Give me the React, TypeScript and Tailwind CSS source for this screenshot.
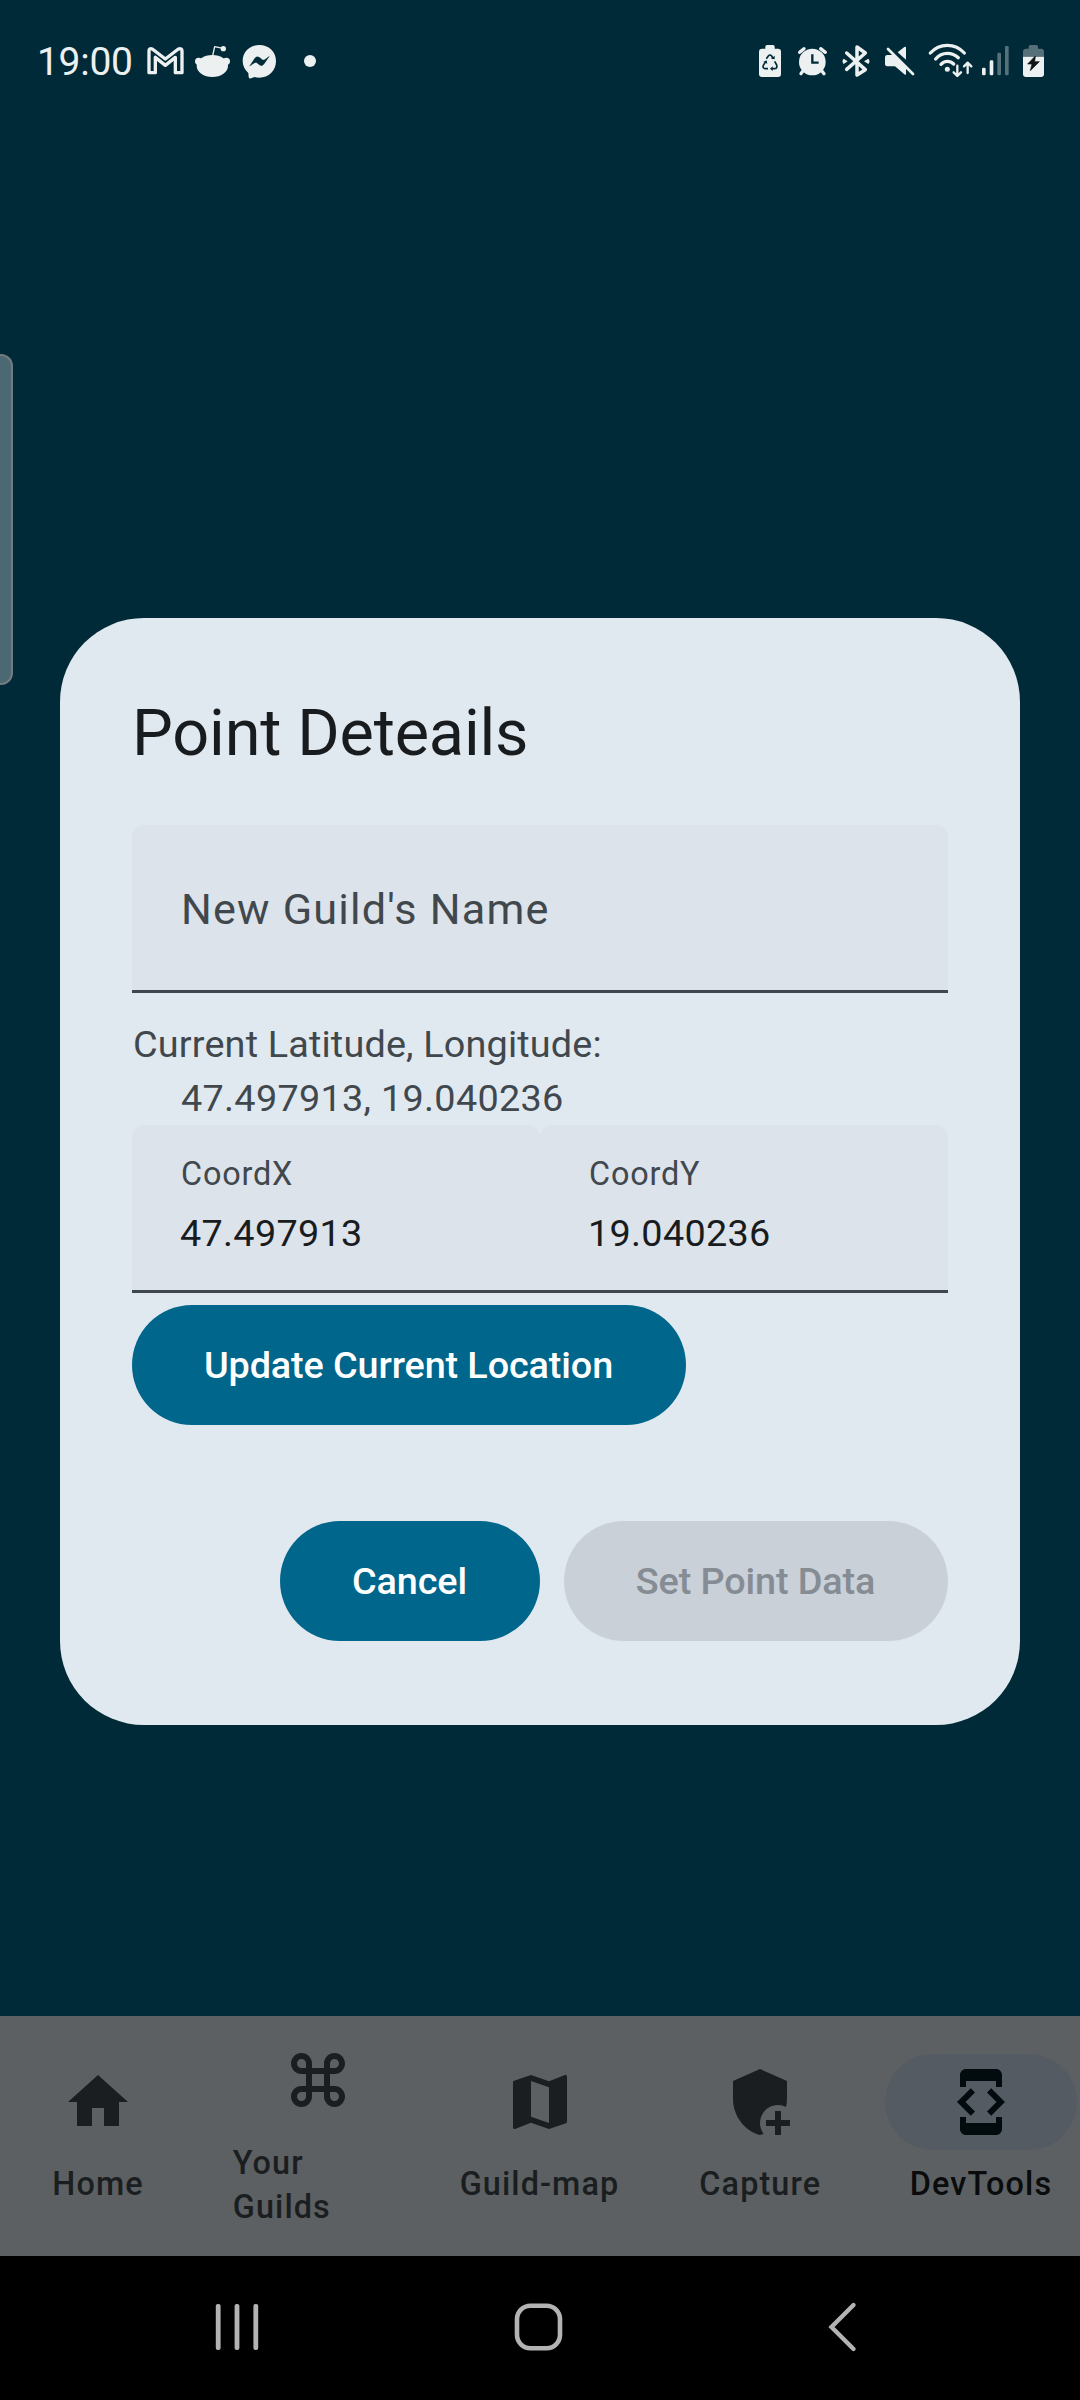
import type { ReactNode } from "react";
import {
  MdAddModerator,
  MdDeveloperMode,
  MdHome,
  MdKeyboardCommandKey,
  MdMap,
} from "react-icons/md";

const LIGHT = "#edf0f1";
const DARK = "#002a37";

function StatusBar() {
  return (
    <header className="flex h-20 shrink-0 items-center justify-between pr-[30px] pl-[37px]">
      <div className="flex h-20 items-center">
        <span className="w-[103px] pt-[3px] text-[39px] leading-[44px] tracking-[-0.3px] text-[#edf0f1]">19:00</span>
        <svg className="h-20 w-[50px]" viewBox="420 0 150 240" fill="none">
          <path
            d="M447 158V93Q447 84 457 87L496 117L535 87Q546 84 546 93V158H526V112L496 136L466 112V158Z"
            stroke={LIGHT}
            strokeWidth="10"
            strokeLinejoin="round"
          />
        </svg>
        <svg className="h-20 w-[46px]" viewBox="570 0 138 240" fill={LIGHT}>
          <ellipse cx="637" cy="138" rx="47" ry="33" />
          <circle cx="596" cy="124" r="11" />
          <circle cx="679" cy="124" r="11" />
          <path d="M638 107L644 80L669 85" fill="none" stroke={LIGHT} strokeWidth="4" strokeLinejoin="round" />
          <circle cx="670" cy="86" r="8" />
        </svg>
        <svg className="h-20 w-[47px]" viewBox="708 0 141 240" fill={LIGHT}>
          <path d="M778 75C750 75 728 95 728 123C728 138 735 150 745 159L746 171Q747 177 753 175L764 171Q771 173 778 173C806 173 828 152 828 123C828 95 806 75 778 75Z" />
          <path
            d="M749 138L765 114Q771 107 778 112L787 119Q790 121 794 119L808 109L792 132Q786 140 779 135L770 128Q767 126 763 129Z"
            fill={DARK}
            stroke={DARK}
            strokeLinejoin="round"
          />
        </svg>
        <svg className="h-20 w-[50px]" viewBox="849 0 150 240">
          <circle cx="930" cy="123" r="18" fill={LIGHT} />
        </svg>
      </div>

      <div className="flex h-20 items-center">
        <svg className="h-20 w-[30px]" viewBox="45 0 90 240" fill={LIGHT}>
          <rect x="57" y="86" width="66" height="85" rx="9" />
          <rect x="76" y="75" width="28" height="20" rx="5" />
          <g fill="none" stroke={DARK} strokeWidth="5" strokeLinejoin="round">
            <path d="M79 116L85 108Q90 102 95 108L99 115" />
            <path d="M104 124L110 135Q113 146 103 146H96" />
            <path d="M84 146H76Q67 145 70 136L77 125" />
          </g>
          <path d="M93 116L104 118L104 107ZM98 139V153L90 146ZM70 126L80 121L82 131Z" fill={DARK} />
        </svg>
        <svg className="h-20 w-[45px]" viewBox="135 0 135 240" fill={LIGHT}>
          <circle cx="217" cy="126" r="40" />
          <path
            d="M179 97L192 86M242 86L256 97M190 151L183 161M244 151L252 161"
            stroke={LIGHT}
            strokeWidth="10"
            strokeLinecap="round"
          />
          <path d="M217 103V128H236" fill="none" stroke={DARK} strokeWidth="7" />
        </svg>
        <svg className="h-20 w-[45px]" viewBox="270 0 135 240" fill="none">
          <path
            d="M320 99L376 149L351 165V81L376 99L320 148"
            stroke={LIGHT}
            strokeWidth="10.5"
            strokeLinejoin="round"
            strokeLinecap="round"
          />
          <path d="M311 116L323 124L311 132Q304 124 311 116ZM385 116L372 124L385 132Q392 124 385 116Z" fill={LIGHT} />
        </svg>
        <svg className="h-20 w-[45px]" viewBox="405 0 135 240" fill={LIGHT}>
          <path d="M442 105H460L498 141V161Q498 167 493 163L465 139H442Q435 139 435 133V112Q435 105 442 105Z" />
          <path d="M473 97L493 81Q498 78 498 83V119Z" />
          <path d="M444 87L519 162" stroke={LIGHT} strokeWidth="8" strokeLinecap="round" />
        </svg>
        <svg className="h-20 w-[55px]" viewBox="540 0 165 240" fill="none">
          <g stroke={LIGHT} strokeWidth="10" strokeLinecap="round">
            <path d="M571 99Q592 76 622 76Q652 76 673 99" />
            <path d="M587 117Q601 100 622 100Q641 100 655 113" />
            <path d="M603 133Q611 124 622 124Q633 124 641 132" />
          </g>
          <circle cx="622" cy="148" r="7.5" fill={LIGHT} />
          <path
            d="M652 137V167M641 157L652 168L663 157M683 159V129M672 139L683 128L694 139"
            stroke={LIGHT}
            strokeWidth="7"
            strokeLinecap="round"
            strokeLinejoin="round"
          />
        </svg>
        <svg className="h-20 w-[40px]" viewBox="705 0 120 240" fill={LIGHT}>
          <rect x="726" y="143" width="11" height="23" rx="4" />
          <rect x="749" y="121" width="11" height="45" rx="4" />
          <rect x="772" y="98" width="11" height="68" rx="4" opacity=".36" />
          <rect x="795" y="78" width="11" height="88" rx="4" opacity=".36" />
        </svg>
        <svg className="h-20 w-[35px]" viewBox="825 0 105 240">
          <path
            d="M849 110V95Q849 86 858 86H866V80Q866 75 871 75H889Q894 75 894 80V86H903Q912 86 912 95V110Z"
            fill="#557079"
          />
          <path d="M849 110H912V162Q912 171 903 171H858Q849 171 849 162Z" fill={LIGHT} />
          <path
            d="M886 108L863 132H876L871 152L898 125H884Z"
            fill="#101417"
            stroke="#101417"
            strokeWidth="2"
            strokeLinejoin="round"
          />
        </svg>
      </div>
    </header>
  );
}

function CoordField({ label, value }: { label: string; value: string }) {
  return (
    <label className="flex h-[168px] w-[408px] flex-col rounded-t-[12px] border-b-[3px] border-[#41484d] bg-[#dce3ea] pt-[28px] pl-12">
      <span className="pl-px text-[32.4px] leading-[43px] tracking-[0.8px] text-[#41484d]">{label}</span>
      <span className="mt-[10px] text-[37.8px] leading-[54px] tracking-[0.3px] text-[#191c1e]">{value}</span>
    </label>
  );
}

function PillButton({
  children,
  width,
  disabled = false,
}: {
  children: ReactNode;
  width: string;
  disabled?: boolean;
}) {
  const tone = disabled ? "bg-[#c9d0d8] text-[#858c93]" : "bg-[#00668b] text-white";
  return (
    <button
      disabled={disabled}
      className={`${width} ${tone} h-[120px] rounded-full pr-px text-[37.8px] leading-[54px] font-medium tracking-[-0.12px] whitespace-nowrap`}
    >
      {children}
    </button>
  );
}

function PointDialog() {
  return (
    <main className="mx-[60px] mt-[518px] flex h-[1107px] shrink-0 flex-col rounded-[84px] bg-[#e1e9f0] px-[72px] pt-[72px]">
      <h1 className="h-[87px] text-[64.8px] leading-[86.4px] tracking-[-0.18px] text-[#191c1e]">Point Deteails</h1>
      <div className="mt-12 flex h-[168px] items-center rounded-t-[12px] border-b-[3px] border-[#41484d] bg-[#dce3ea] pt-[5px] pl-[49px] text-[43.2px] tracking-[1.2px] text-[#41484d]">
        New Guild's Name
      </div>
      <p className="mt-6 pl-px text-[37.8px] leading-[54px] tracking-[0.17px] text-[#41484d]">
        Current Latitude, Longitude:
        <span className="block pl-12 tracking-[0.3px]">47.497913, 19.040236</span>
      </p>
      <div className="flex">
        <CoordField label="CoordX" value="47.497913" />
        <CoordField label="CoordY" value="19.040236" />
      </div>
      <div className="mt-3 flex">
        <PillButton width="w-[554px]">Update Current Location</PillButton>
      </div>
      <div className="mt-24 flex justify-end gap-6">
        <PillButton width="w-[260px]">Cancel</PillButton>
        <PillButton width="w-[384px]" disabled>
          Set Point Data
        </PillButton>
      </div>
    </main>
  );
}

function NavItem({ icon, label, active = false }: { icon: ReactNode; label: string; active?: boolean }) {
  return (
    <div className="flex w-[196px] shrink-0 flex-col items-center pt-[38px]">
      <div
        className={
          active
            ? "flex h-24 w-48 items-center justify-center rounded-full bg-[#545b62] text-[72px] text-[#020b0e]"
            : "flex h-24 w-48 items-center justify-center text-[72px] text-[#1a1e20]"
        }
      >
        {icon}
      </div>
      <span
        className={
          active
            ? "mt-[13px] text-[32.4px] leading-[43.2px] font-medium tracking-[1.1px] text-[#0a0b0c]"
            : "mt-[13px] text-[32.4px] leading-[43.2px] font-medium tracking-[1.1px] text-[#1a1e20]"
        }
      >
        {label}
      </span>
    </div>
  );
}

function BottomNav() {
  return (
    <nav className="mt-auto flex h-[240px] shrink-0 justify-between bg-[#5c6062] pr-px">
      <NavItem icon={<MdHome />} label="Home" />
      <div className="flex w-[196px] shrink-0 flex-col items-center pt-[16px] pr-[2px] font-medium text-[#1a1e20]">
        <div className="flex h-24 items-center text-[72px]">
          <MdKeyboardCommandKey />
        </div>
        <span className="mt-[13px] w-[170px] pr-10 text-[32.4px] leading-[44px] tracking-[1.1px]">Your Guilds</span>
      </div>
      <NavItem icon={<MdMap />} label="Guild-map" />
      <NavItem icon={<MdAddModerator />} label="Capture" />
      <NavItem icon={<MdDeveloperMode />} label="DevTools" active />
    </nav>
  );
}

function SystemNav() {
  return (
    <footer className="flex h-36 shrink-0 items-center justify-between bg-black pr-[211px] pb-[2px] pl-[207px]">
      <svg className="size-[60px]" viewBox="0 0 60 60" fill="#b3b3b3">
        <rect x="8.8" y="7" width="4.8" height="46" rx="2" />
        <rect x="27.6" y="7" width="4.8" height="46" rx="2" />
        <rect x="46.4" y="7" width="4.8" height="46" rx="2" />
      </svg>
      <svg className="size-[60px]" viewBox="0 0 60 60" fill="none">
        <rect x="9" y="8.7" width="43" height="42.6" rx="13.5" stroke="#b3b3b3" strokeWidth="4.6" />
      </svg>
      <svg className="size-[60px]" viewBox="0 0 60 60" fill="none">
        <path d="M44.5 8L22.5 30L44.5 52" stroke="#b3b3b3" strokeWidth="4.4" strokeLinecap="round" />
      </svg>
    </footer>
  );
}

export default function App() {
  return (
    <div className="relative flex h-[2400px] w-[1080px] flex-col overflow-hidden bg-[#002a37] pt-5 font-['Roboto',sans-serif]">
      <StatusBar />
      <div className="absolute top-[354px] left-0 h-[331px] w-[13px] rounded-r-[12px] border-2 border-l-0 border-[#737b80] bg-[#4c6872]" />
      <PointDialog />
      <BottomNav />
      <SystemNav />
    </div>
  );
}
